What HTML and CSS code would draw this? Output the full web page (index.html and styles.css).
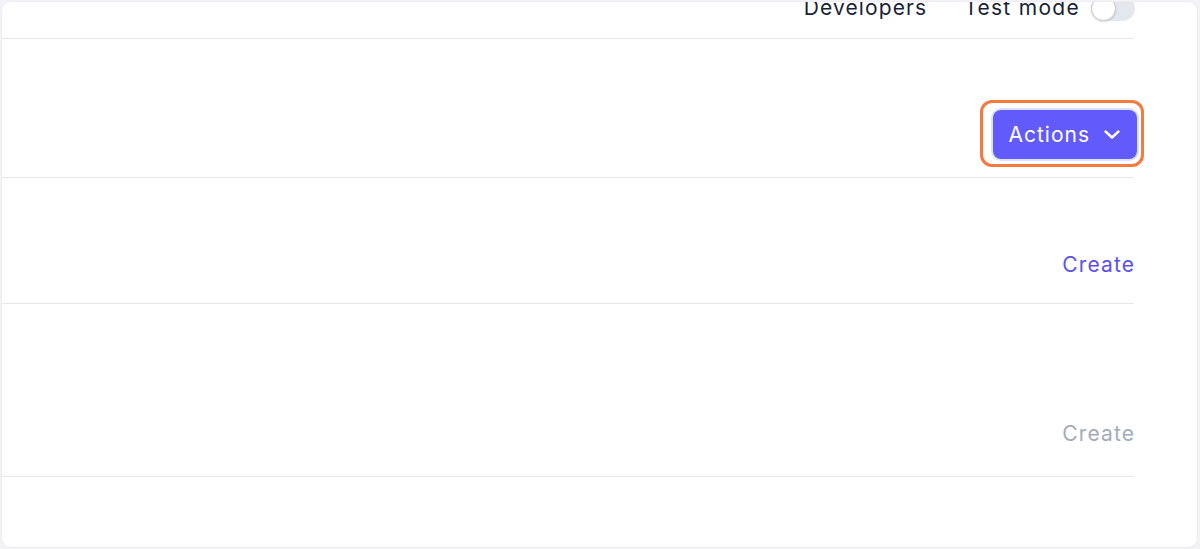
FILE: index.html
```html
<!DOCTYPE html>
<html>
<head>
<meta charset="utf-8">
<link rel="stylesheet" href="styles.css">
</head>
<body>
<div class="card">
  <div class="topbar">
    <span class="toplink">Developers</span>
    <span class="toplink mode">Test mode</span>
    <span class="toggle"><span class="knob"></span></span>
  </div>
  <div class="section s-actions">
    <div class="focus-ring">
      <button class="btn">Actions
        <svg class="chev" width="18" height="11" viewBox="0 0 18 11"><path d="M2.5 2.5 L9 8.5 L15.5 2.5" fill="none" stroke="#fff" stroke-width="2.4" stroke-linecap="round" stroke-linejoin="round"/></svg>
      </button>
    </div>
  </div>
  <div class="section s-create1">
    <span class="create">Create</span>
  </div>
  <div class="section s-create2">
    <span class="create disabled">Create</span>
  </div>
</div>
</body>
</html>
```
FILE: styles.css
```css
html, body {
  margin: 0;
  padding: 0;
  height: 100%;
  background: #f3f3f7;
  font-family: Inter, "Noto Sans", sans-serif;
}
.card {
  box-sizing: border-box;
  margin: 1px 2px 0 1px;
  height: 547px;
  background: #fff;
  border: 1px solid #ececf2;
  border-radius: 10px;
  overflow: hidden;
  padding-right: 63px;
}
.topbar {
  height: 37px;
  border-bottom: 1px solid #e8e8ec;
  display: flex;
  justify-content: flex-end;
  align-items: flex-start;
  margin-top: -1px;
}
.toplink {
  font-size: 21px;
  color: #1a1f36;
  line-height: 24px;
  margin-top: -5px;
  letter-spacing: 1.1px;
}
.mode { margin-left: 37px; letter-spacing: 1.3px; }
.toggle {
  margin-left: 11px;
  margin-top: -5px;
  width: 44px;
  height: 25px;
  border-radius: 13px;
  background: #e3e8ee;
  position: relative;
  box-sizing: border-box;
  margin-right: -1px;
}
.knob {
  position: absolute;
  left: 0;
  top: 0;
  width: 25px;
  height: 25px;
  border-radius: 50%;
  background: #fff;
  box-sizing: border-box;
  border: 1px solid #c7ccd4;
  box-shadow: 0 1px 2px rgba(0,0,0,0.15);
}
.section {
  display: flex;
  justify-content: flex-end;
  align-items: flex-end;
  border-bottom: 1px solid #e8e8ec;
  box-sizing: border-box;
}
.s-actions { height: 139px; padding-bottom: 10px; }
.focus-ring {
  border: 3px solid #f6793e;
  border-radius: 12px;
  padding: 7px 4px 5px 10px;
  margin-right: -10px;
}
.btn {
  display: flex;
  align-items: center;
  gap: 13px;
  height: 49px;
  padding: 0 16px 0 15px;
  border: none;
  border-radius: 8px;
  background: #625afa;
  color: #fff;
  font-family: Inter, "Noto Sans", sans-serif;
  font-size: 21px;
  letter-spacing: 1px;
  box-shadow: 0 0 0 2px #d9e2ff;
}
.s-create1 { height: 126px; padding-bottom: 26px; }
.s-create2 { height: 173px; padding-bottom: 30px; }
.create {
  font-size: 21px;
  line-height: 24px;
  color: #5b52ea;
  letter-spacing: 1.1px;
  margin-right: -1px;
}
.create.disabled { color: #a3acb9; }
```
